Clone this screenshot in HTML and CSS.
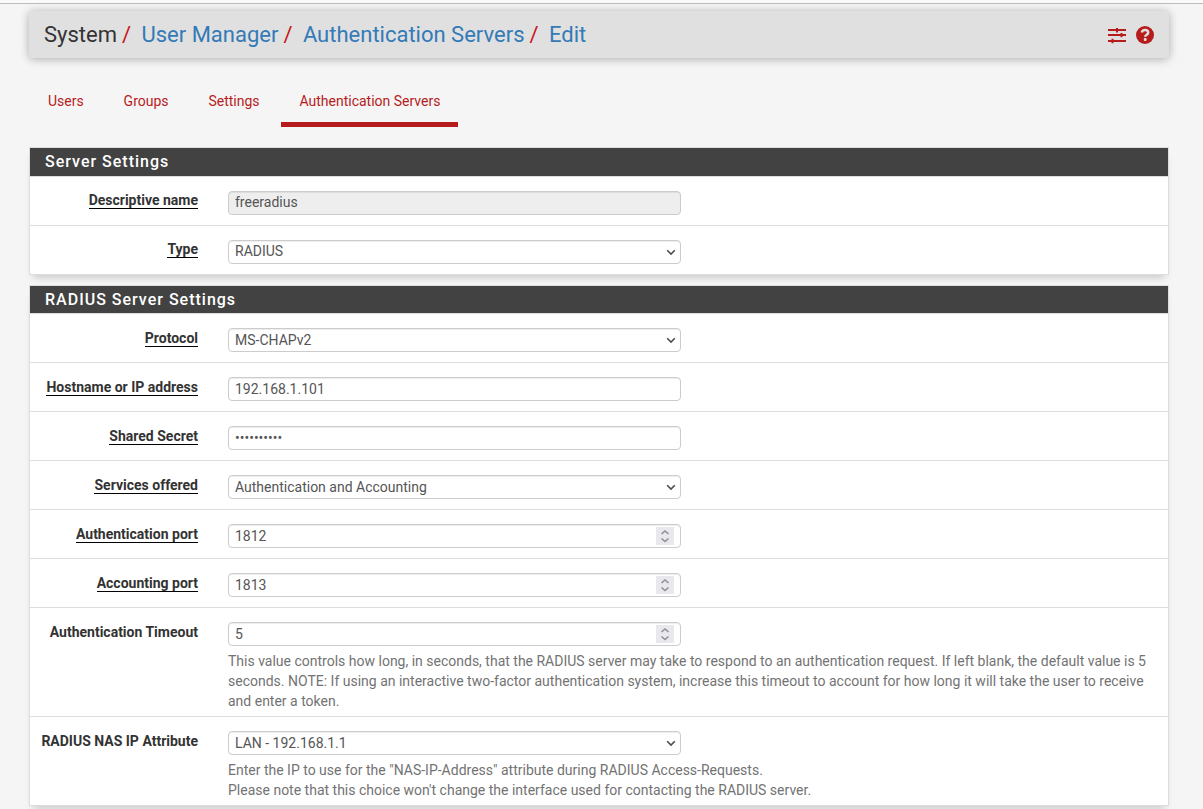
FILE: index.html
```html
<!DOCTYPE html>
<html lang="en">
<head>
<meta charset="utf-8">
<title>System: User Manager: Authentication Servers: Edit</title>
<link rel="stylesheet" href="styles.css">
</head>
<body>
<svg class="defs" width="0" height="0">
  <symbol id="chevron" viewBox="0 0 10 8"><path d="M1.200 2.300 5 6.100 8.800 2.300" fill="none" stroke="#4d4d4d" stroke-width="1.6"/></symbol>
  <symbol id="spin" viewBox="0 0 18 18"><path d="M5.500 7 9 4l3.500 3M5.500 11.500 9 14.500l3.500-3" fill="none" stroke="#8f8f9d" stroke-width="1.6"/></symbol>
</svg>
<div class="topbar"></div>
<header class="header">
  <h1 class="crumbs"><span>System</span><i>/</i><a>User Manager</a><i>/</i><a>Authentication Servers</a><i>/</i><a>Edit</a></h1>
  <div class="icons">
    <svg class="sliders" width="18" height="16" viewBox="0 0 18 16" fill="#b71c1c"><path d="M0 1h18v2H0zM0 6h18v2H0zM0 12h18v2H0z"/><path d="M8 0h2v4.500H8zM12.500 5h2v4.200h-2zM3.500 10.700h2v4.600h-2z"/></svg>
    <svg width="18" height="18" viewBox="0 0 18 18"><circle cx="9" cy="9" r="9" fill="#b71c1c"/><path d="M5.800 6.600C6.100 5 7.200 4.100 9 4.100c1.900 0 3.200 1.100 3.200 2.600 0 2.100-3 2.100-3 4.100" fill="none" stroke="#e0e0e0" stroke-width="2.500"/><rect x="7.800" y="12.100" width="2.800" height="2.800" rx=".8" fill="#e0e0e0"/></svg>
  </div>
</header>
<nav class="tabs"><a>Users</a><a>Groups</a><a>Settings</a><a class="active">Authentication Servers</a></nav>

<section class="panel first">
  <h2>Server Settings</h2>
  <div class="row"><div class="label"><span class="req">Descriptive name</span></div><div class="field"><div class="control disabled">freeradius</div></div></div>
  <div class="row"><div class="label"><span class="req">Type</span></div><div class="field"><div class="control">RADIUS<svg class="chev"><use href="#chevron"/></svg></div></div></div>
</section>

<section class="panel second">
  <h2>RADIUS Server Settings</h2>
  <div class="row"><div class="label"><span class="req">Protocol</span></div><div class="field"><div class="control">MS-CHAPv2<svg class="chev"><use href="#chevron"/></svg></div></div></div>
  <div class="row"><div class="label"><span class="req">Hostname or IP address</span></div><div class="field"><div class="control">192.168.1.101</div></div></div>
  <div class="row"><div class="label"><span class="req">Shared Secret</span></div><div class="field"><div class="control">••••••••••</div></div></div>
  <div class="row"><div class="label"><span class="req">Services offered</span></div><div class="field"><div class="control">Authentication and Accounting<svg class="chev"><use href="#chevron"/></svg></div></div></div>
  <div class="row"><div class="label"><span class="req">Authentication port</span></div><div class="field"><div class="control">1812<svg class="spin"><use href="#spin"/></svg></div></div></div>
  <div class="row"><div class="label"><span class="req">Accounting port</span></div><div class="field"><div class="control">1813<svg class="spin"><use href="#spin"/></svg></div></div></div>
  <div class="row"><div class="label"><span>Authentication Timeout</span></div><div class="field"><div class="control">5<svg class="spin"><use href="#spin"/></svg></div>
    <p class="help">This value controls how long, in seconds, that the RADIUS server may take to respond to an authentication request. If left blank, the default value is 5<br>seconds. NOTE: If using an interactive two-factor authentication system, increase this timeout to account for how long it will take the user to receive<br>and enter a token.</p></div></div>
  <div class="row"><div class="label"><span>RADIUS NAS IP Attribute</span></div><div class="field"><div class="control">LAN - 192.168.1.1<svg class="chev"><use href="#chevron"/></svg></div>
    <p class="help">Enter the IP to use for the "NAS-IP-Address" attribute during RADIUS Access-Requests.<br>Please note that this choice won't change the interface used for contacting the RADIUS server.</p></div></div>
</section>
</body>
</html>
```
FILE: styles.css
```css
* { box-sizing: border-box; }
html { overflow: hidden; }
body {
  margin: 0;
  height: 809px;
  overflow: hidden;
  background: #f5f5f5;
  color: #333;
  font: 14px/20px Roboto, sans-serif;
}
.defs { display: block; }
.topbar { height: 4px; background: #fafafa; border-bottom: 1px solid #bdbdbd; }
.header {
  display: flex;
  justify-content: space-between;
  height: 47px;
  margin: 7px 34px 0 29px;
  padding: 0 15px;
  background: #e0e0e0;
  border-radius: 4px;
  box-shadow: 0 1px 10px rgba(0, 0, 0, .3);
}
.crumbs { margin: 0; font-size: 22px; font-weight: 400; line-height: 47px; white-space: nowrap; }
.crumbs a { color: #337ab7; }
.crumbs i { margin: 0 10.4px 0 5px; color: #c9151b; font-style: normal; }
.icons { display: flex; align-items: center; gap: 10px; padding-top: 1px; }
.sliders { margin-top: 2px; }
.tabs { display: flex; gap: 3.9px; height: 47px; margin: 22px 0 0 30px; }
.tabs a { height: 47px; padding: 11px 18px 0; color: #b71c1c; }
.tabs .active { border-bottom: 5px solid #b71c1c; }
.panel {
  margin: 20px 34px 0 29px;
  background: #fff;
  border: 1px solid #ddd;
  box-shadow: 0 6px 8px -4px rgba(0, 0, 0, .2);
}
.panel h2 {
  height: 29px;
  margin: 0;
  padding-left: 15px;
  background: #424242;
  border-bottom: 1px solid #ddd;
  color: #fff;
  font-size: 16px;
  font-weight: 500;
  letter-spacing: 1px;
  line-height: 27px;
}
.second { margin-top: 10px; }
.second h2 { height: 28px; }
.row { display: flex; padding: 14px 14px 5px 0; border-bottom: 1px solid #ddd; min-height: 49px; }
.row:last-child { border-bottom: 0; min-height: 48px; }
.label { width: 168px; margin-right: 30px; text-align: right; font-weight: 700; white-space: nowrap; }
.first .label { margin-top: -1px; }
.label span { display: inline-block; line-height: 18px; }
.req { height: 18px; border-bottom: 1px solid #000; }
.field { flex: 1; min-width: 0; }
.control {
  display: flex;
  align-items: center;
  justify-content: space-between;
  width: 453px;
  height: 24px;
  padding: 0 6px;
  border: 1px solid #ccc;
  border-radius: 4px;
  box-shadow: inset 0 1px 1px rgba(0, 0, 0, .075);
  color: #555;
}
.first .control { padding-bottom: 2px; }
.disabled { background: #eee; }
.chev { width: 10px; height: 8px; margin: 0 -2px 0 0; }
.first .chev { margin-top: 2px; }
.spin { width: 18px; height: 18px; background: #e9e9ed; }
.help { margin: 5px 0 0; color: #737373; white-space: nowrap; }
```
